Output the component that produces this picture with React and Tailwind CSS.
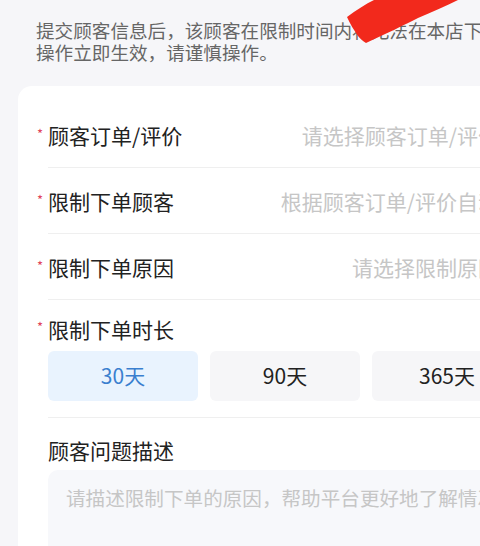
const font = { fontFamily: '"Noto Sans CJK SC", "Noto Sans", sans-serif' };

const Star = () => (
  <span className="absolute -left-[11px] top-[6px] text-[13px] leading-none text-[#e0445a]">*</span>
);

const Chevron = () => (
  <svg width="16" height="16" viewBox="0 0 16 16" className="ml-[7px] shrink-0">
    <path d="M6 3l5 5-5 5" fill="none" stroke="#c4c4c4" strokeWidth="1.6" strokeLinecap="round" strokeLinejoin="round" />
  </svg>
);

const SelectRow = ({ label, placeholder }) => (
  <div className="flex h-[66px] items-center border-b border-[#efefef]">
    <span className="relative whitespace-nowrap text-[21px] leading-[28px] text-[#222]">
      <Star />
      {label}
    </span>
    <div className="flex flex-1 items-center justify-end overflow-hidden">
      <span className="whitespace-nowrap text-[21px] leading-[28px] text-[#c6c6c6]">{placeholder}</span>
      <Chevron />
    </div>
  </div>
);

const durations = ["30天", "90天", "365天"];

export default function App() {
  return (
    <div className="relative h-[546px] w-[480px] overflow-hidden bg-[#f6f6f9]" style={font}>
      <div className="w-[570px]">
        <div className="px-[36px] pt-[19px] text-[18.6px] leading-[22px] text-[#666]">
          <div className="whitespace-nowrap">提交顾客信息后，该顾客在限制时间内将无法在本店下单，</div>
          <div className="whitespace-nowrap">操作立即生效，请谨慎操作。</div>
        </div>

        <div className="mx-[18px] mt-[23px] rounded-[14px] bg-white px-[30px] pt-[16px] pb-[30px]">
          <SelectRow label="顾客订单/评价" placeholder="请选择顾客订单/评价" />
          <SelectRow label="限制下单顾客" placeholder="根据顾客订单/评价自动" />
          <SelectRow label="限制下单原因" placeholder="请选择限制原因" />

          <div className="border-b border-[#efefef] pt-[15px] pb-[16px]">
            <span className="relative whitespace-nowrap text-[21px] leading-[28px] text-[#222]">
              <Star />
              限制下单时长
            </span>
            <div className="mt-[8px] grid grid-cols-3 gap-[12px]">
              {durations.map((d, i) => (
                <div
                  key={d}
                  className={
                    i === 0
                      ? "flex h-[50px] items-center justify-center rounded-[6px] bg-[#e9f3fe] text-[21px] text-[#3a7fcf]"
                      : "flex h-[50px] items-center justify-center rounded-[6px] bg-[#f6f6f8] text-[21px] text-[#222]"
                  }
                >
                  {d}
                </div>
              ))}
            </div>
          </div>

          <div className="pt-[18px]">
            <div className="text-[21px] leading-[28px] text-[#222]">顾客问题描述</div>
            <div className="mt-[6px] h-[130px] rounded-[10px] bg-[#f7f8fb] px-[18px] pt-[14px]">
              <span className="whitespace-nowrap text-[19.6px] leading-[28px] text-[#c6c6c6]">
                请描述限制下单的原因，帮助平台更好地了解情况
              </span>
            </div>
          </div>
        </div>
      </div>

      <svg className="absolute left-0 top-0" width="480" height="60" viewBox="0 0 480 60">
        <path
          d="M347 17 C356 10 366 4 374 0 L458 0 C446 6 432 12 418 18 C404 25 388 33 366 43 C362 41 360 38 358 36 C354 30 350 24 347 17 Z"
          fill="#f2291c"
        />
      </svg>
    </div>
  );
}
